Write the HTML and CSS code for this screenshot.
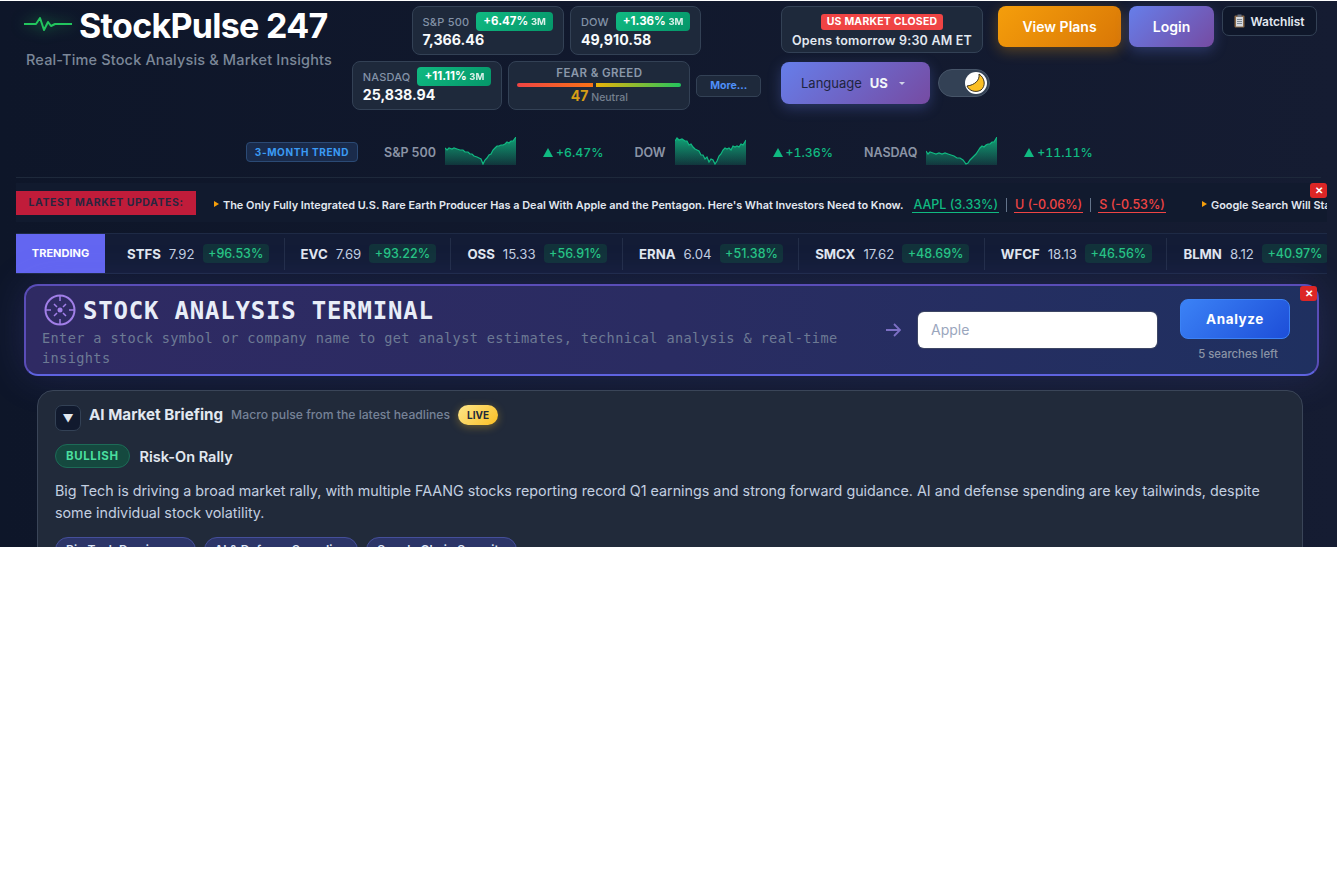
FILE: index.html
```html
<!DOCTYPE html>
<html lang="en">
<head>
  <meta charset="UTF-8" />
  <meta name="viewport" content="width=device-width, initial-scale=1.0"/>
  <title>StockPulse 247</title>
  <link rel="stylesheet" href="styles.css">
</head>
<body>
  <div class="page">
    <!-- Header -->
    <header class="header">
      <div class="brand">
        <div class="brand-top">
          <svg class="pulse" width="48" height="20" viewBox="0 0 48 20">
            <path d="M0 9H12L16 3L20 15L24 7L27 11L31 9H48" fill="none" stroke="#22c55e" stroke-width="2" stroke-linejoin="round"/>
          </svg>
          <h1 class="brand-name">StockPulse 247</h1>
        </div>
        <p class="brand-sub">Real-Time Stock Analysis &amp; Market Insights</p>
      </div>

      <div class="stats">
        <div class="stats-row">
          <div class="stat">
            <div class="stat-head"><span class="stat-name">S&amp;P 500</span><span class="stat-badge">+6.47% <small>3M</small></span></div>
            <div class="stat-value">7,366.46</div>
          </div>
          <div class="stat">
            <div class="stat-head"><span class="stat-name">DOW</span><span class="stat-badge">+1.36% <small>3M</small></span></div>
            <div class="stat-value">49,910.58</div>
          </div>
        </div>
        <div class="stats-row">
          <div class="stat">
            <div class="stat-head"><span class="stat-name">NASDAQ</span><span class="stat-badge">+11.11% <small>3M</small></span></div>
            <div class="stat-value">25,838.94</div>
          </div>
          <div class="stat fear">
            <div class="fear-title">FEAR &amp; GREED</div>
            <div class="fear-bar"><span class="fear-left"></span><span class="fear-right"></span></div>
            <div class="fear-score"><b>47</b> Neutral</div>
          </div>
          <button class="more">More...</button>
        </div>
      </div>

      <div class="actions">
        <div class="actions-row">
          <div class="market">
            <span class="market-tag">US MARKET CLOSED</span>
            <span class="market-next">Opens tomorrow 9:30 AM ET</span>
          </div>
          <button class="btn btn-plans">View Plans</button>
          <button class="btn btn-login">Login</button>
          <button class="watchlist">
            <svg width="11" height="14" viewBox="0 0 11 14">
              <rect x="0.5" y="1.5" width="10" height="12" rx="1" fill="#8a6a4a"/>
              <rect x="2" y="3" width="7" height="9.5" fill="#d5d9de"/>
              <rect x="3.5" y="0.5" width="4" height="2.5" fill="#6b7280"/>
              <path d="M3 5.5H8M3 7.5H8M3 9.5H8" stroke="#7b8794" stroke-width="1"/>
            </svg>
            Watchlist
          </button>
        </div>
        <div class="actions-row">
          <div class="lang">
            <span class="lang-label">Language</span>
            <b class="lang-code">US</b>
            <span class="caret"></span>
          </div>
          <div class="toggle">
            <span class="knob">
              <svg width="20" height="20" viewBox="0 0 20 20">
                <path d="M13 1C14 7 9 12 1 13C3 18 10 20 15 17C20 13 19 5 13 1Z" fill="#fbbf24" stroke="#3b3320" stroke-width="1"/>
              </svg>
            </span>
          </div>
        </div>
      </div>
    </header>

    <!-- 3 month trend -->
    <div class="trend">
      <span class="trend-tag">3-MONTH TREND</span>
      <div class="trend-item">
        <span class="trend-name">S&amp;P 500</span>
        <svg class="spark" width="71" height="28" viewBox="0 0 71 28">
          <defs>
            <linearGradient id="sparkFade" x1="0" y1="0" x2="0" y2="1">
              <stop offset="0" stop-color="#10b981" stop-opacity="0.85"/>
              <stop offset="1" stop-color="#10b981" stop-opacity="0.18"/>
            </linearGradient>
          </defs>
          <path fill="url(#sparkFade)" d="M0 11L2 13L4 11L7 12L9 11L12 12L15 13L18 13L20 15L23 15L25 17L27 17L29 19L32 20L34 21L36 22L38 27L40 23L42 21L44 18L46 17L48 13L50 11L52 9L54 9L56 8L58 8L60 7L62 5L64 6L66 4L68 4L71 0V28H0Z"/>
          <path class="spark-line" d="M0 11L2 13L4 11L7 12L9 11L12 12L15 13L18 13L20 15L23 15L25 17L27 17L29 19L32 20L34 21L36 22L38 27L40 23L42 21L44 18L46 17L48 13L50 11L52 9L54 9L56 8L58 8L60 7L62 5L64 6L66 4L68 4L71 0"/>
        </svg>
        <span class="trend-up"><i class="tri"></i>+6.47%</span>
      </div>
      <div class="trend-item">
        <span class="trend-name">DOW</span>
        <svg class="spark" width="71" height="28" viewBox="0 0 71 28">
          <path fill="url(#sparkFade)" d="M0 4L2 1L4 3L7 2L10 4L12 4L14 8L16 7L18 10L20 12L22 13L24 14L26 18L28 18L30 22L32 20L34 25L36 22L38 23L40 27L42 24L44 19L46 17L48 13L50 11L52 12L54 11L56 13L58 9L60 10L62 9L64 10L66 7L68 8L71 3V28H0Z"/>
          <path class="spark-line" d="M0 4L2 1L4 3L7 2L10 4L12 4L14 8L16 7L18 10L20 12L22 13L24 14L26 18L28 18L30 22L32 20L34 25L36 22L38 23L40 27L42 24L44 19L46 17L48 13L50 11L52 12L54 11L56 13L58 9L60 10L62 9L64 10L66 7L68 8L71 3"/>
        </svg>
        <span class="trend-up"><i class="tri"></i>+1.36%</span>
      </div>
      <div class="trend-item">
        <span class="trend-name">NASDAQ</span>
        <svg class="spark" width="71" height="28" viewBox="0 0 71 28">
          <path fill="url(#sparkFade)" d="M0 14L2 17L4 15L7 16L10 17L13 16L16 17L19 16L22 17L25 18L28 19L31 21L34 21L37 23L40 27L42 26L44 23L46 21L48 19L50 17L52 14L54 11L56 9L58 10L60 8L62 7L64 7L66 5L68 5L71 0V28H0Z"/>
          <path class="spark-line" d="M0 14L2 17L4 15L7 16L10 17L13 16L16 17L19 16L22 17L25 18L28 19L31 21L34 21L37 23L40 27L42 26L44 23L46 21L48 19L50 17L52 14L54 11L56 9L58 10L60 8L62 7L64 7L66 5L68 5L71 0"/>
        </svg>
        <span class="trend-up"><i class="tri"></i>+11.11%</span>
      </div>
    </div>

    <!-- News ticker -->
    <div class="ticker">
      <span class="ticker-label">LATEST MARKET UPDATES:</span>
      <div class="ticker-track">
        <span class="ticker-news"><i class="flag"></i>The Only Fully Integrated U.S. Rare Earth Producer Has a Deal With Apple and the Pentagon. Here's What Investors Need to Know.</span>
        <a class="sym up">AAPL (3.33%)</a><span class="sep"></span>
        <a class="sym down">U (-0.06%)</a><span class="sep"></span>
        <a class="sym down">S (-0.53%)</a>
        <span class="ticker-news second"><i class="flag"></i>Google Search Will Start Showing Results</span>
      </div>
      <button class="close">&#10005;</button>
    </div>

    <!-- Trending strip -->
    <div class="trending">
      <div class="trending-label">TRENDING</div>
      <div class="trending-list">
        <div class="mover"><b>STFS</b><span>7.92</span><em>+96.53%</em></div>
        <div class="mover"><b>EVC</b><span>7.69</span><em>+93.22%</em></div>
        <div class="mover"><b>OSS</b><span>15.33</span><em>+56.91%</em></div>
        <div class="mover"><b>ERNA</b><span>6.04</span><em>+51.38%</em></div>
        <div class="mover"><b>SMCX</b><span>17.62</span><em>+48.69%</em></div>
        <div class="mover"><b>WFCF</b><span>18.13</span><em>+46.56%</em></div>
        <div class="mover"><b>BLMN</b><span>8.12</span><em>+40.97%</em></div>
      </div>
    </div>

    <!-- Lower section -->
    <div class="lower">
      <section class="terminal">
        <div class="terminal-text">
          <div class="terminal-head">
            <svg width="32" height="32" viewBox="0 0 32 32" fill="none" stroke="#a17fe8" stroke-width="2">
              <circle cx="16" cy="16" r="14.500"/>
              <circle cx="16" cy="16" r="2.500" fill="#a17fe8" stroke="none"/>
              <path d="M16 1V7M16 25V31M1 16H7M25 16H31M10 10L13 13M22 10L19 13M10 22L13 19M22 22L19 19" stroke-width="1.500"/>
            </svg>
            <h2>STOCK ANALYSIS TERMINAL</h2>
          </div>
          <p>Enter a stock symbol or company name to get analyst estimates, technical analysis &amp; real-time insights</p>
        </div>
        <svg class="arrow" width="16" height="16" viewBox="0 0 16 16" fill="none" stroke="#7c6fc4" stroke-width="1.800">
          <path d="M1 8H15M9 2L15 8L9 14"/>
        </svg>
        <input class="search" type="text" placeholder="Apple" />
        <div class="analyze-box">
          <button class="analyze">Analyze</button>
          <span class="left">5 searches left</span>
        </div>
        <button class="close">&#10005;</button>
      </section>

      <section class="briefing">
        <div class="briefing-head">
          <button class="collapse">&#9660;</button>
          <h3>AI Market Briefing</h3>
          <span class="briefing-sub">Macro pulse from the latest headlines</span>
          <span class="live">LIVE</span>
        </div>
        <div class="mood">
          <span class="bullish">BULLISH</span>
          <strong>Risk-On Rally</strong>
        </div>
        <p class="summary">Big Tech is driving a broad market rally, with multiple FAANG stocks reporting record Q1 earnings and strong forward guidance. AI and defense spending are key tailwinds, despite some individual stock volatility.</p>
        <div class="chips">
          <span class="chip">Big Tech Dominance</span>
          <span class="chip">AI &amp; Defense Spending</span>
          <span class="chip">Supply Chain Security</span>
        </div>
      </section>
    </div>
  </div>
</body>
</html>
```

FILE: styles.css
```css
* {
  box-sizing: border-box;
}
body {
  margin: 0;
  background: #fff;
  font-family: 'Inter', sans-serif;
  color: #f1f5f9;
}
button {
  font-family: inherit;
  cursor: pointer;
}
.page {
  margin-top: 1px;
  height: 546px;
  overflow: hidden;
  background: linear-gradient(to right, #0e1629, #151c32);
}

/* Header */
.header {
  display: flex;
  height: 125px;
  padding: 5px 0 0 16px;
}
.brand {
  width: 320px;
  flex: none;
  padding-top: 1px;
}
.brand-top {
  display: flex;
  align-items: center;
  gap: 7px;
  padding-left: 8px;
  height: 38px;
}
.pulse {
  filter: drop-shadow(0 0 7px rgba(34, 197, 94, 0.7));
  margin-top: -2px;
}
.brand-name {
  margin: 0;
  font-size: 34px;
  line-height: 38px;
  font-weight: 700;
  letter-spacing: -0.7px;
  color: #fff;
}
.brand-sub {
  margin: 6px 0 0 10px;
  font-size: 14.500px;
  font-weight: 500;
  letter-spacing: 0.15px;
  white-space: nowrap;
  color: #7b8798;
}
.stats {
  width: 409px;
  margin-left: 16px;
  flex: none;
  display: flex;
  flex-direction: column;
  align-items: center;
  gap: 6px;
}
.stats-row {
  display: flex;
  align-items: center;
  gap: 6px;
}
.stat {
  height: 49px;
  padding: 5px 10px;
  background: #1e293b;
  border: 1px solid #334155;
  border-radius: 8px;
}
.stat-head {
  display: flex;
  align-items: center;
  gap: 7px;
}
.stat-name {
  font-size: 11px;
  font-weight: 500;
  letter-spacing: 0.2px;
  color: #8392a7;
}
.stat-badge {
  padding: 2px 7px;
  font-size: 11.500px;
  line-height: 14px;
  font-weight: 700;
  white-space: nowrap;
  color: #fff;
  border-radius: 4px;
  background: linear-gradient(135deg, #10b981, #059669);
}
.stat-badge small {
  font-size: 9.500px;
  opacity: 0.85;
}
.stat-value {
  font-size: 14.200px;
  line-height: 18px;
  font-weight: 700;
  color: #f8fafc;
}
.fear {
  width: 182px;
  padding: 4px 8px;
  text-align: center;
}
.fear-title {
  font-size: 11.500px;
  line-height: 15px;
  font-weight: 600;
  letter-spacing: 0.4px;
  color: #8b98aa;
}
.fear-bar {
  display: flex;
  gap: 3px;
  margin-top: 2px;
  height: 4px;
}
.fear-left {
  width: 76px;
  border-radius: 2px 0 0 2px;
  background: linear-gradient(to right, #ef4444, #f97316);
}
.fear-right {
  flex: 1;
  border-radius: 0 2px 2px 0;
  background: linear-gradient(to right, #eab308, #22c55e);
}
.fear-score {
  font-size: 10.500px;
  line-height: 18px;
  font-weight: 500;
  color: #75808f;
}
.fear-score b {
  font-size: 14px;
  color: #d69e16;
}
.more {
  width: 65px;
  height: 22px;
  padding: 0;
  font-size: 10.500px;
  font-weight: 700;
  color: #4f8ff7;
  background: #1e293b;
  border: 1px solid #334155;
  border-radius: 5px;
}
.actions {
  margin-left: 20px;
  display: flex;
  flex-direction: column;
  gap: 9px;
}
.actions-row {
  display: flex;
  align-items: flex-start;
  gap: 8px;
}
.market {
  width: 202px;
  height: 47px;
  margin-right: 7px;
  display: flex;
  flex-direction: column;
  align-items: center;
  padding-top: 7px;
  background: #1e293b;
  border: 1px solid #334155;
  border-radius: 8px;
}
.market-tag {
  padding: 0 6px;
  font-size: 10.500px;
  line-height: 16px;
  font-weight: 700;
  letter-spacing: 0.2px;
  color: #fff;
  background: #ef4444;
  border-radius: 3px;
}
.market-next {
  margin-top: 3px;
  font-size: 12.500px;
  line-height: 15px;
  font-weight: 600;
  letter-spacing: 0.2px;
  color: #e2e8f0;
}
.btn {
  height: 41px;
  border: none;
  border-radius: 8px;
  font-size: 14px;
  font-weight: 600;
  color: #fff;
}
.btn-plans {
  width: 123px;
  background: linear-gradient(135deg, #f59e0b, #d97706);
  box-shadow: 0 4px 14px rgba(245, 158, 11, 0.3);
}
.btn-login {
  width: 85px;
  background: linear-gradient(135deg, #667eea, #764ba2);
  box-shadow: 0 4px 14px rgba(102, 126, 234, 0.3);
}
.watchlist {
  display: flex;
  align-items: center;
  justify-content: center;
  gap: 5px;
  width: 95px;
  height: 30px;
  padding: 0;
  font-size: 12px;
  font-weight: 600;
  color: #e2e8f0;
  background: #0f172a;
  border: 1px solid #334155;
  border-radius: 7px;
}
.lang {
  width: 149px;
  height: 42px;
  display: flex;
  align-items: center;
  padding-left: 20px;
  font-size: 13px;
  border-radius: 8px;
  background: linear-gradient(135deg, #667eea, #764ba2);
  box-shadow: 0 4px 14px rgba(102, 126, 234, 0.3);
}
.lang-label {
  margin-top: -1px;
  color: #1e2440;
}
.lang-code {
  margin-left: 8px;
  color: #f1f5f9;
}
.caret {
  margin-left: 11px;
  border: 3.500px solid transparent;
  border-top: 3.500px solid #cfd3e8;
  border-bottom: none;
}
.toggle {
  position: relative;
  width: 52px;
  height: 28px;
  margin-top: 7px;
  background: #334155;
  border: 1px solid #475569;
  border-radius: 14px;
}
.knob {
  position: absolute;
  right: 2px;
  top: 2px;
  width: 22px;
  height: 22px;
  display: flex;
  align-items: center;
  justify-content: center;
  background: #fff;
  border-radius: 50%;
}

/* Trend */
.trend {
  margin: 0 16px;
  height: 52px;
  display: flex;
  align-items: center;
  padding: 0 0 0 230px;
  border-bottom: 1px solid #1e293b;
}
.trend-tag {
  width: 112px;
  height: 20px;
  margin-right: 26px;
  text-align: center;
  font-size: 10px;
  line-height: 18px;
  font-weight: 700;
  letter-spacing: 0.6px;
  color: #3b9bf5;
  background: #1a2b4b;
  border: 1px solid #2b4a75;
  border-radius: 4px;
}
.trend-item {
  display: flex;
  align-items: center;
  margin-right: 31px;
}
.trend-name {
  margin: 1px 9px 0 0;
  font-size: 12.500px;
  font-weight: 600;
  color: #8b94a6;
}
.spark {
  margin-top: -1px;
}
.spark-line {
  fill: none;
  stroke: #10b981;
  stroke-width: 1.200;
}
.trend-up {
  display: flex;
  align-items: center;
  margin: 1px 0 0 27px;
  font-size: 12.300px;
  font-weight: 500;
  font-variant-numeric: tabular-nums;
  color: #10b981;
}
.tri {
  margin-right: 3px;
  border: 5px solid transparent;
  border-top: none;
  border-bottom: 9px solid #10b981;
}

/* Ticker */
.ticker {
  position: relative;
  margin: 5px 10px 0 16px;
  height: 39px;
  display: flex;
  align-items: center;
  overflow: hidden;
  background: #111a2e;
}
.ticker-label {
  flex: none;
  width: 180px;
  height: 24px;
  text-align: center;
  font-size: 10.500px;
  line-height: 24px;
  font-weight: 700;
  letter-spacing: 0.55px;
  color: #2a2640;
  background: #c01c3a;
}
.ticker-track {
  display: flex;
  align-items: center;
  padding: 5px 0 0 18px;
  white-space: nowrap;
  font-size: 10.900px;
  font-weight: 600;
  color: #e2e8f0;
}
.ticker-news {
  display: flex;
  align-items: center;
}
.flag {
  margin: -3px 4px 0 0;
  border: 3px solid transparent;
  border-right: none;
  border-left: 5px solid #f59e0b;
}
.sym {
  padding: 0 1px;
  font-size: 12.500px;
  font-weight: 500;
  border-bottom: 1px solid currentColor;
}
.ticker-news + .sym {
  margin-left: 9px;
}
.up {
  color: #10b981;
}
.down {
  color: #ef4444;
}
.sep {
  width: 1px;
  height: 14px;
  margin: 0 7px;
  background: #64748b;
}
.second {
  margin-left: 36px;
}
.close {
  position: absolute;
  top: 0;
  right: 0;
  width: 17px;
  height: 15px;
  padding: 0;
  font-size: 10px;
  line-height: 15px;
  font-weight: 700;
  color: #fff;
  background: #dc2626;
  border: none;
  border-radius: 3px;
}

/* Trending strip */
.trending {
  margin: 11px 10px 0 16px;
  height: 41px;
  display: flex;
  overflow: hidden;
  background: #131c36;
  border-top: 1px solid #1e2a45;
  border-bottom: 1px solid #1e2a45;
}
.trending-label {
  flex: none;
  width: 89px;
  text-align: center;
  font-size: 11px;
  line-height: 39px;
  font-weight: 700;
  color: #fff;
  background: #6366f1;
}
.trending-list {
  display: flex;
  align-items: center;
  padding-left: 6px;
}
.mover {
  display: flex;
  align-items: center;
  gap: 8px;
  height: 32px;
  padding: 0 14.700px 0 16px;
  font-size: 13.200px;
  white-space: nowrap;
  border-right: 1px solid #232e48;
}
.mover b {
  font-weight: 700;
  color: #e2e8f0;
}
.mover span {
  color: #c3cfe0;
}
.mover em {
  padding: 0 5.500px;
  font-size: 12.500px;
  font-style: normal;
  font-weight: 500;
  line-height: 19px;
  color: #27c485;
  background: #12333a;
  border-radius: 4px;
}
.mover:last-child {
  border-right: none;
}

/* Lower section */
.lower {
  height: 300px;
  padding: 10px 18px 0 24px;
}
.terminal {
  position: relative;
  height: 92px;
  display: flex;
  align-items: center;
  padding: 0 29px 0 16px;
  background: linear-gradient(90deg, #2f2a63, #2a2c62 50%, #1f3060);
  border: 2px solid #5a4db8;
  border-bottom-color: #5f63e0;
  border-radius: 14px;
  box-shadow: 0 0 40px rgba(99, 102, 241, 0.18);
}
.terminal-text {
  width: 826px;
  flex: none;
}
.terminal-head {
  display: flex;
  align-items: center;
  gap: 7px;
  margin: 0 0 0 2px;
}
.terminal-head h2 {
  margin: 3px 0 0;
  font-family: 'DejaVu Sans Mono', monospace;
  font-size: 24px;
  line-height: 32px;
  font-weight: 700;
  letter-spacing: 0.8px;
  color: #e8edf8;
}
.terminal-text p {
  margin: 1px 0 0;
  font-family: 'DejaVu Sans Mono', monospace;
  font-size: 13.600px;
  line-height: 20px;
  letter-spacing: 0.37px;
  color: #6d7a94;
}
.arrow {
  flex: none;
  margin: 0 17px 0 17px;
}
.search {
  width: 239px;
  height: 36px;
  flex: none;
  padding: 0 13px 2px;
  font-family: inherit;
  font-size: 14px;
  border: none;
  border-radius: 6px;
  background: #fff;
  box-shadow: 0 0 0 1px #3d4664;
  outline: none;
}
.search::placeholder {
  color: #9aa6bd;
}
.analyze-box {
  margin-left: 23px;
  display: flex;
  flex-direction: column;
  align-items: center;
  gap: 8px;
}
.analyze {
  width: 110px;
  height: 40px;
  font-size: 13.500px;
  font-weight: 700;
  letter-spacing: 0.6px;
  color: #fff;
  background: linear-gradient(135deg, #3b82f6, #1d4ed8);
  border: 1px solid #3b82f6;
  border-radius: 8px;
}
.left {
  margin-left: 6px;
  font-size: 11.300px;
  font-weight: 500;
  color: #8b94a6;
}

/* Briefing */
.briefing {
  position: relative;
  margin: 14px 16px 0 13px;
  padding: 14px 17px;
  height: 260px;
  background: #212a3a;
  border: 1px solid #3a4558;
  border-radius: 16px;
}
.briefing-head {
  display: flex;
  align-items: flex-start;
  gap: 8px;
}
.collapse {
  width: 26px;
  height: 26px;
  padding: 0;
  font-size: 11px;
  color: #e2e8f0;
  background: #111a2e;
  border: 1px solid #334155;
  border-radius: 7px;
}
.briefing-head h3 {
  margin: 0;
  font-size: 15.200px;
  line-height: 20px;
  font-weight: 700;
  color: #e2e8f0;
}
.briefing-sub {
  font-size: 12.200px;
  line-height: 20px;
  font-weight: 500;
  color: #768297;
}
.live {
  padding: 0 9px;
  font-size: 10px;
  line-height: 20px;
  font-weight: 700;
  color: #1e293b;
  background: linear-gradient(135deg, #fde68a, #fbbf24);
  border-radius: 10px;
  box-shadow: 0 2px 8px rgba(251, 191, 36, 0.35);
}
.mood {
  display: flex;
  align-items: center;
  gap: 10px;
  margin-top: 13px;
}
.bullish {
  padding: 0 10px;
  font-size: 11.500px;
  line-height: 22px;
  font-weight: 700;
  letter-spacing: 0.6px;
  color: #4ade9e;
  background: #15493f;
  border: 1px solid #1d6b57;
  border-radius: 12px;
}
.mood strong {
  font-size: 14.500px;
  font-weight: 600;
  color: #e2e8f0;
}
.summary {
  margin: 12px 0 0;
  font-size: 14.300px;
  line-height: 22px;
  color: #c3cfe0;
}
.chips {
  display: flex;
  gap: 8px;
  margin-top: 13px;
}
.chip {
  padding: 0 10px;
  font-size: 12px;
  line-height: 24px;
  font-weight: 600;
  color: #dbe3f5;
  background: #2c3568;
  border: 1px solid #454f9a;
  border-radius: 13px;
}
```
